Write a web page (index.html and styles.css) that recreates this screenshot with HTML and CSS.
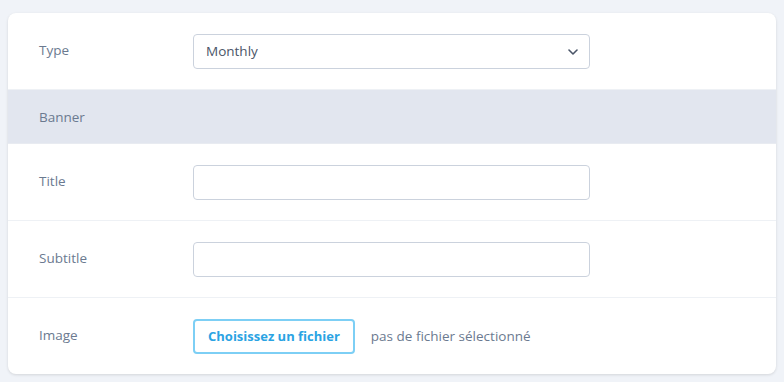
FILE: index.html
```html
<!DOCTYPE html>
<html lang="en">
<head>
  <meta charset="UTF-8" />
  <title>Banner settings</title>
  <link rel="stylesheet" href="styles.css">
</head>
<body>
  <div class="card">
    <div class="row">
      <label class="row-label" for="type">Type</label>
      <div class="field select-wrap">
        <select id="type">
          <option selected>Monthly</option>
          <option>Weekly</option>
        </select>
        <svg class="chevron" width="10" height="6" viewBox="0 0 10 6"><path d="M1 1l4 4 4-4" fill="none" stroke="#4a5568" stroke-width="1.6" stroke-linecap="round" stroke-linejoin="round"/></svg>
      </div>
    </div>

    <div class="section">Banner</div>

    <div class="row">
      <label class="row-label" for="title">Title</label>
      <div class="field"><input type="text" id="title"></div>
    </div>

    <div class="row">
      <label class="row-label" for="subtitle">Subtitle</label>
      <div class="field"><input type="text" id="subtitle"></div>
    </div>

    <div class="row last">
      <span class="row-label">Image</span>
      <div class="file-field">
        <button class="file-btn">Choisissez un fichier</button>
        <span class="file-name">pas de fichier sélectionné</span>
      </div>
    </div>
  </div>
</body>
</html>
```

FILE: styles.css
```css
body {
  margin: 0;
  padding: 13px 8px 8px;
  background-color: #f0f3f8;
  font-family: 'Open Sans', sans-serif;
  font-size: 13.5px;
  color: #6b7a90;
}

.card {
  background-color: #ffffff;
  border-radius: 8px;
  box-shadow: 0 1px 3px rgba(0, 0, 0, 0.12);
  overflow: hidden;
}

.row {
  display: flex;
  align-items: center;
  height: 76px;
  border-bottom: 1px solid #eef1f5;
}

.row.last {
  border-bottom: none;
}

.row-label {
  width: 185px;
  padding-left: 31px;
  padding-bottom: 3px;
  box-sizing: border-box;
  flex-shrink: 0;
}

.field {
  width: 397px;
}

.select-wrap {
  position: relative;
}

select, input[type="text"] {
  display: block;
  width: 100%;
  height: 35px;
  box-sizing: border-box;
  border: 1px solid #cbd2dd;
  border-radius: 4px;
  background-color: #fff;
  font-family: inherit;
  font-size: 13.5px;
  color: #4a5568;
  padding: 0 12px;
  appearance: none;
  outline: none;
}

.chevron {
  position: absolute;
  right: 12px;
  top: 15px;
  pointer-events: none;
}

.section {
  height: 53px;
  display: flex;
  align-items: center;
  padding-left: 31px;
  background-color: #e2e6ef;
  border-bottom: 1px solid #e8ebf1;
}

.file-field {
  display: flex;
  align-items: center;
  gap: 16px;
}

.file-btn {
  height: 35px;
  padding: 0 13px;
  border: 2px solid #7dcff5;
  border-radius: 4px;
  background-color: #fff;
  color: #2aa3e3;
  font-family: inherit;
  font-size: 13px;
  font-weight: 700;
  cursor: pointer;
}
```
